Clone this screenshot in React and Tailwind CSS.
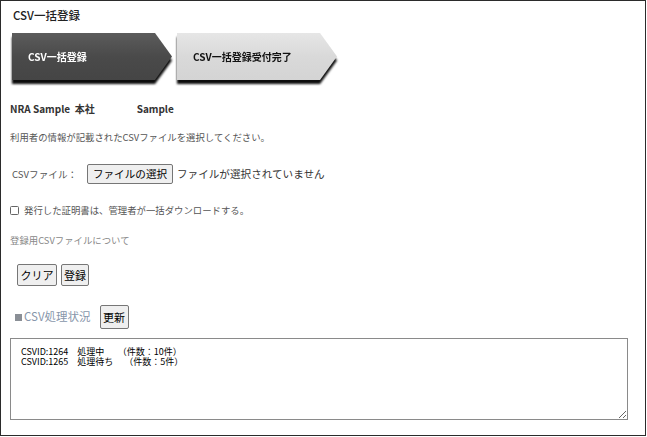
import React from 'react';

const font = "font-['Noto_Sans_CJK_JP','Noto_Sans',sans-serif]";

const Step = ({ label, dark }) => (
  <div className="drop-shadow-[0_4px_1px_rgba(0,0,0,0.95)]">
    <div
      className={`w-[160px] h-[47px] flex items-center pl-[16px] [clip-path:polygon(0_0,143px_0,160px_50%,143px_100%,0_100%)] text-[10px] font-bold whitespace-nowrap ${
        dark
          ? 'bg-gradient-to-b from-[#5c5c5c] via-[#4a4a4a] to-[#454545] text-white'
          : 'bg-gradient-to-b from-[#e6e6e6] via-[#d9d9d9] to-[#d4d4d4] text-[#111]'
      }`}
    >
      {label}
    </div>
  </div>
);

const Btn = ({ children, className = '' }) => (
  <button
    type="button"
    className={`h-[22px] p-0 flex items-center justify-center whitespace-nowrap bg-[#efefef] border border-[#767676] rounded-[2px] text-[11px] leading-none text-black ${className}`}
  >
    {children}
  </button>
);

export default function App() {
  const status = 'CSVID:1264　処理中　　（件数：10件）\nCSVID:1265　処理待ち　 （件数：5件）';

  return (
    <div className={`w-[646px] h-[436px] border border-[#2b2b2b] bg-white flex flex-col ${font}`}>
      <div className="mt-[6px] ml-[12px] h-[16px] leading-[16px] text-[11.5px] font-medium text-[#222]">CSV一括登録</div>

      <div className="mt-[10px] ml-[11px] flex gap-[5px] h-[47px]">
        <Step label="CSV一括登録" dark />
        <Step label="CSV一括登録受付完了" />
      </div>

      <div className="mt-[22px] ml-[9px] h-[14px] leading-[14px] text-[10px] font-bold text-[#333] flex">
        <span>NRA Sample&nbsp;&nbsp;本社</span>
        <span className="ml-[42px]">Sample</span>
      </div>

      <div className="mt-[14px] ml-[9px] h-[14px] leading-[14px] text-[9.4px] text-[#555]">
        利用者の情報が記載されたCSVファイルを選択してください。
      </div>

      <div className="mt-[20px] ml-[11px] h-[20px] flex items-center">
        <span className="text-[9.6px] text-[#555] w-[75px]">CSVファイル：</span>
        <button
          type="button"
          className="h-[20px] w-[86px] p-0 whitespace-nowrap bg-[#efefef] border border-[#767676] rounded-[2px] text-[10.6px] text-black"
        >
          ファイルの選択
        </button>
        <span className="ml-[4px] text-[10.6px] text-[#333]">ファイルが選択されていません</span>
      </div>

      <label className="mt-[20px] ml-[9px] h-[12px] flex items-center gap-[5px]">
        <span className="w-[9px] h-[9px] border border-[#666] rounded-[1.5px] bg-white" />
        <span className="text-[9.4px] text-[#555]">発行した証明書は、管理者が一括ダウンロードする。</span>
      </label>

      <div className="mt-[18px] ml-[9px] h-[12px] leading-[12px] text-[9.4px] text-[#888]">登録用CSVファイルについて</div>

      <div className="mt-[18px] ml-[16px] flex gap-[4px]">
        <Btn className="w-[40px]">クリア</Btn>
        <Btn className="w-[28px]">登録</Btn>
      </div>

      <div className="mt-[19px] ml-[14px] flex items-center">
        <span className="flex items-center text-[11.5px] text-[#8796aa]">
          <span className="w-[7px] h-[7px] bg-[#8a8f96] mr-[2px]" />
          CSV処理状況
        </span>
        <Btn className="ml-[9px] w-[29px] h-[24px]">更新</Btn>
      </div>

      <textarea
        readOnly
        value={status}
        className="mt-[9px] ml-[9px] w-[618px] h-[82px] border border-[#8a8a8a] px-[10px] py-[8px] text-[9px] leading-[10px] text-black whitespace-pre font-['Noto_Sans_CJK_JP',monospace] outline-none resize-y"
      />
    </div>
  );
}
